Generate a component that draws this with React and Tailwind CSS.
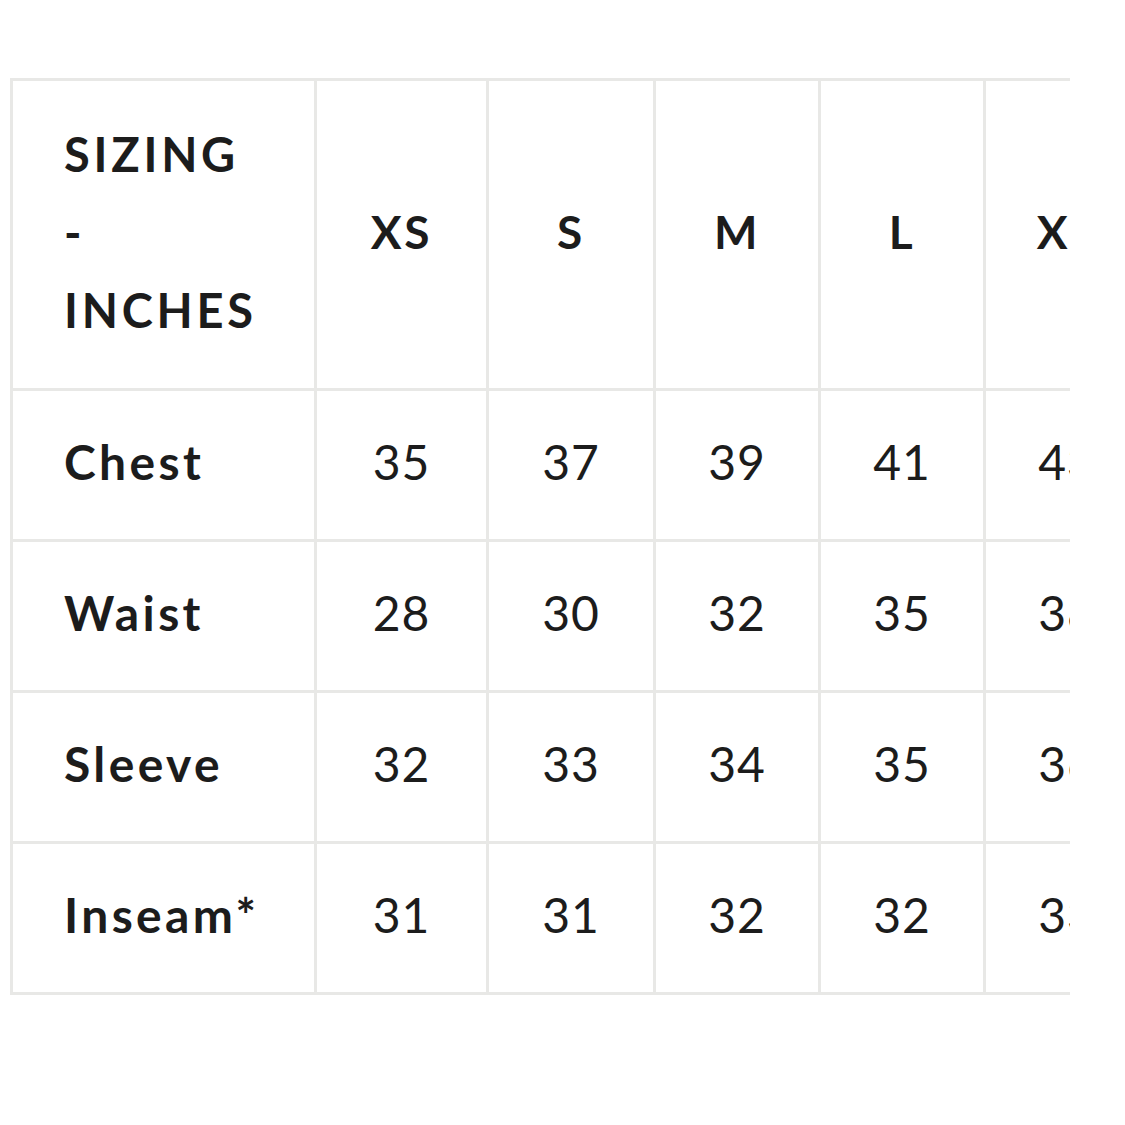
const sizes = ['XS', 'S', 'M', 'L', 'XL', 'XXL'];

const rows = [
  { label: 'Chest', values: [35, 37, 39, 41, 43, 45] },
  { label: 'Waist', values: [28, 30, 32, 35, 38, 41] },
  { label: 'Sleeve', values: [32, 33, 34, 35, 36, 37] },
  { label: 'Inseam*', values: [31, 31, 32, 32, 33, 33] },
];

const colWidths = ['w-[304px]', 'w-[172px]', 'w-[167px]', 'w-[165px]', 'w-[165px]', 'w-[165px]', 'w-[165px]'];

export default function App() {
  return (
    <div className="min-h-[1125px] bg-white font-['Lato',sans-serif] text-[#1c1c1c]">
      <div className="pt-[78px] pl-[10px]">
        <div className="w-[1060px] overflow-hidden">
          <table className="table-fixed border-collapse w-[1303px]">
            <colgroup>
              {colWidths.map((w, i) => (
                <col key={i} className={w} />
              ))}
            </colgroup>
            <thead>
              <tr className="h-[310px]">
                <th className="border-[3px] border-[#e8e8e6] pl-[51px] pb-[6px] text-left align-middle font-bold text-[47px] leading-[78px] tracking-[0.08em]">
                  <span className="block">SIZING</span>
                  <span className="block">-</span>
                  <span className="block">INCHES</span>
                </th>
                {sizes.map((s) => (
                  <th
                    key={s}
                    className="border-[3px] border-[#e8e8e6] pb-[6px] text-center align-middle font-bold text-[46px] tracking-[0.06em] whitespace-nowrap"
                  >
                    {s}
                  </th>
                ))}
              </tr>
            </thead>
            <tbody>
              {rows.map((r) => (
                <tr key={r.label} className="h-[151px]">
                  <td className="border-[3px] border-[#e8e8e6] pl-[51px] pb-[6px] text-left align-middle font-bold text-[48px] tracking-[0.07em]">
                    {r.label}
                  </td>
                  {r.values.map((v, i) => (
                    <td
                      key={i}
                      className="border-[3px] border-[#e8e8e6] pb-[6px] text-center align-middle text-[48px] tracking-[0.02em]"
                    >
                      {v}
                    </td>
                  ))}
                </tr>
              ))}
            </tbody>
          </table>
        </div>
      </div>
    </div>
  );
}
